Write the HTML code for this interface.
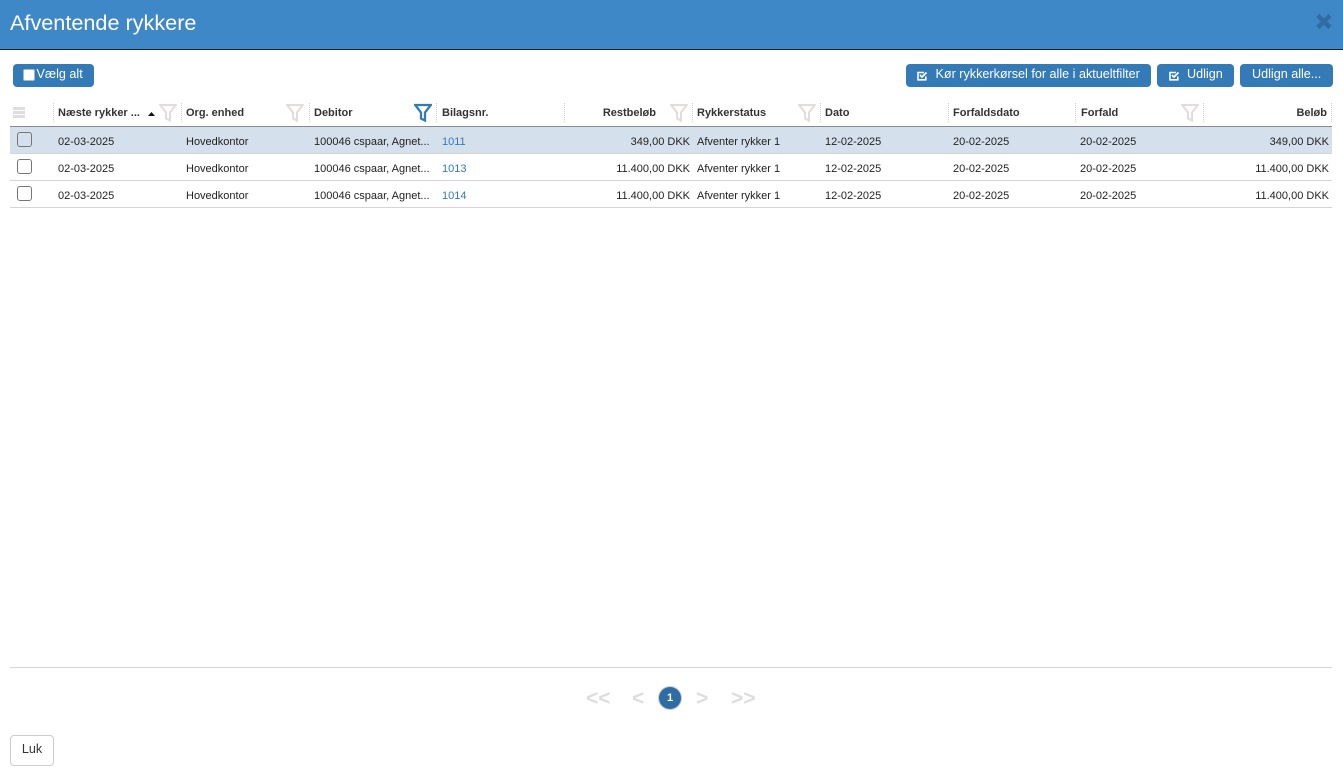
<!DOCTYPE html>
<html lang="da"><head><meta charset="utf-8"><title>Afventende rykkere</title>
<style>
html,body{margin:0;padding:0;width:1343px;height:772px;overflow:hidden;background:#fff;font-family:"Liberation Sans",Arial,sans-serif;color:#222}
.a{position:absolute;white-space:nowrap}
.hd{position:absolute;left:0;top:0;width:1343px;height:49px;background:#3f88c8;border-bottom:1px solid #1a2530}
.title{left:10px;top:10px;font-size:21.65px;line-height:26px;color:#fff}
.btn{position:absolute;top:64px;height:23px;background:#337ab7;border-radius:4px;color:#fff;font-size:12.6px;line-height:21px;white-space:nowrap}
.btn span{position:absolute;top:0}
.th{position:absolute;top:107px;font-size:11px;line-height:13px;font-weight:bold;color:#333;white-space:nowrap}
.td{position:absolute;font-size:11px;line-height:13px;color:#222;white-space:nowrap}
.r{text-align:right}
.sep{position:absolute;top:103px;height:19px;width:0;border-left:1px dotted #ccc}
.line{position:absolute;left:10px;width:1322px;height:1px}
.cb{position:absolute;left:17px;width:13px;height:13px;border:1px solid #767676;border-radius:3px;background:#fff}
.lnk{color:#337ab7}
.pg{position:absolute;top:688px;font-size:21px;line-height:22px;color:#ddd;font-weight:bold;white-space:nowrap}
</style></head><body>
<div class="hd"></div>
<div class="a title">Afventende rykkere</div>
<svg class="a" style="left:1315px;top:13px" width="18" height="17" viewBox="0 0 18 17"><path d="M2.8 2.5L15 14.5M15 2.5L2.8 14.5" stroke="#2f6ca3" stroke-width="4.6" fill="none"/></svg>

<div class="btn" style="left:13px;width:81px"><i class="a" style="left:10px;top:5px;width:10px;height:10px;background:#fff;border-radius:2px;border:1px solid #a8b8c8"></i><span style="left:23.5px">Vælg alt</span></div>
<div class="btn" style="left:906px;width:245px"><svg class="a" style="left:11px;top:7px" width="11" height="10" viewBox="0 0 11 10"><path d="M8.8 5.5V8.8H1V1.5H7" fill="none" stroke="#fff" stroke-width="1.6"/><path d="M3 4L5 6L9.5 1.5" fill="none" stroke="#fff" stroke-width="1.8"/></svg><span style="left:29.5px">Kør rykkerkørsel for alle i aktueltfilter</span></div>
<div class="btn" style="left:1157px;width:77px"><svg class="a" style="left:12px;top:7px" width="11" height="10" viewBox="0 0 11 10"><path d="M8.8 5.5V8.8H1V1.5H7" fill="none" stroke="#fff" stroke-width="1.6"/><path d="M3 4L5 6L9.5 1.5" fill="none" stroke="#fff" stroke-width="1.8"/></svg><span style="left:30px">Udlign</span></div>
<div class="btn" style="left:1240px;width:93px"><span style="left:12px">Udlign alle...</span></div>

<svg class="a" style="left:13px;top:107px" width="13" height="11" viewBox="0 0 13 11"><path d="M0 0h12v3H0zM0 4h12v3H0zM0 8h12v3H0z" fill="#e2dddd"/><path d="M0 3.5h12M0 7.5h12" stroke="#fff"/></svg>

<div class="sep" style="left:53px"></div><div class="sep" style="left:181px"></div><div class="sep" style="left:309px"></div><div class="sep" style="left:436px"></div><div class="sep" style="left:564px"></div><div class="sep" style="left:692px"></div><div class="sep" style="left:820px"></div><div class="sep" style="left:948px"></div><div class="sep" style="left:1075px"></div><div class="sep" style="left:1203px"></div><div class="sep" style="left:1331px"></div>

<div class="th" style="left:58px">Næste rykker ...</div>
<svg class="a" style="left:148px;top:112px" width="7" height="4"><path d="M0 4L3.5 0L7 4z" fill="#111"/></svg>
<div class="th" style="left:186px">Org. enhed</div>
<div class="th" style="left:314px">Debitor</div>
<div class="th" style="left:442px">Bilagsnr.</div>
<div class="th r" style="left:556px;width:100px">Restbeløb</div>
<div class="th" style="left:697px">Rykkerstatus</div>
<div class="th" style="left:825px">Dato</div>
<div class="th" style="left:953px">Forfaldsdato</div>
<div class="th" style="left:1081px">Forfald</div>
<div class="th r" style="left:1227px;width:100px">Beløb</div>

<svg class="a" style="left:159px;top:103px" width="18" height="19" viewBox="0 0 18 19"><path d="M1.2 2H16.8L11 9.5V17.5L7 15.5V9.5z" fill="none" stroke="#e2dddd" stroke-width="2.1"/></svg>
<svg class="a" style="left:286px;top:103px" width="18" height="19" viewBox="0 0 18 19"><path d="M1.2 2H16.8L11 9.5V17.5L7 15.5V9.5z" fill="none" stroke="#e2dddd" stroke-width="2.1"/></svg>
<svg class="a" style="left:414px;top:103px" width="18" height="19" viewBox="0 0 18 19"><path d="M1.2 2H16.8L11 9.5V17.5L7 15.5V9.5z" fill="none" stroke="#337ab7" stroke-width="2.3"/></svg>
<svg class="a" style="left:670px;top:103px" width="18" height="19" viewBox="0 0 18 19"><path d="M1.2 2H16.8L11 9.5V17.5L7 15.5V9.5z" fill="none" stroke="#e2dddd" stroke-width="2.1"/></svg>
<svg class="a" style="left:798px;top:103px" width="18" height="19" viewBox="0 0 18 19"><path d="M1.2 2H16.8L11 9.5V17.5L7 15.5V9.5z" fill="none" stroke="#e2dddd" stroke-width="2.1"/></svg>
<svg class="a" style="left:1181px;top:103px" width="18" height="19" viewBox="0 0 18 19"><path d="M1.2 2H16.8L11 9.5V17.5L7 15.5V9.5z" fill="none" stroke="#e2dddd" stroke-width="2.1"/></svg>

<div class="line" style="top:126px;background:#8a8a8a"></div>
<div class="a" style="left:10px;top:127px;width:1322px;height:26px;background:#d4e0ec"></div>
<div class="line" style="top:153px;background:#d8d3d3"></div>
<div class="line" style="top:180px;background:#d8d3d3"></div>
<div class="line" style="top:207px;background:#d8d3d3"></div>

<div class="cb" style="top:132px;background:#d4e0ec"></div><div class="cb" style="top:159px"></div><div class="cb" style="top:186px"></div>

<div class="td" style="left:58px;top:136px">02-03-2025</div><div class="td" style="left:186px;top:136px">Hovedkontor</div><div class="td" style="left:314px;top:136px">100046 cspaar, Agnet...</div><div class="td lnk" style="left:442px;top:136px">1011</div><div class="td r" style="left:590px;width:100px;top:136px">349,00 DKK</div><div class="td" style="left:697px;top:136px">Afventer rykker 1</div><div class="td" style="left:825px;top:136px">12-02-2025</div><div class="td" style="left:953px;top:136px">20-02-2025</div><div class="td" style="left:1080px;top:136px">20-02-2025</div><div class="td r" style="left:1229px;width:100px;top:136px">349,00 DKK</div>

<div class="td" style="left:58px;top:163px">02-03-2025</div><div class="td" style="left:186px;top:163px">Hovedkontor</div><div class="td" style="left:314px;top:163px">100046 cspaar, Agnet...</div><div class="td lnk" style="left:442px;top:163px">1013</div><div class="td r" style="left:590px;width:100px;top:163px">11.400,00 DKK</div><div class="td" style="left:697px;top:163px">Afventer rykker 1</div><div class="td" style="left:825px;top:163px">12-02-2025</div><div class="td" style="left:953px;top:163px">20-02-2025</div><div class="td" style="left:1080px;top:163px">20-02-2025</div><div class="td r" style="left:1229px;width:100px;top:163px">11.400,00 DKK</div>

<div class="td" style="left:58px;top:190px">02-03-2025</div><div class="td" style="left:186px;top:190px">Hovedkontor</div><div class="td" style="left:314px;top:190px">100046 cspaar, Agnet...</div><div class="td lnk" style="left:442px;top:190px">1014</div><div class="td r" style="left:590px;width:100px;top:190px">11.400,00 DKK</div><div class="td" style="left:697px;top:190px">Afventer rykker 1</div><div class="td" style="left:825px;top:190px">12-02-2025</div><div class="td" style="left:953px;top:190px">20-02-2025</div><div class="td" style="left:1080px;top:190px">20-02-2025</div><div class="td r" style="left:1229px;width:100px;top:190px">11.400,00 DKK</div>

<div class="line" style="top:667px;background:#d5d5d5"></div>

<div class="pg" style="left:586px">&lt;&lt;</div>
<div class="pg" style="left:632px">&lt;</div>
<div class="a" style="left:659px;top:687px;width:22px;height:22px;border-radius:50%;background:#2e6da4;box-shadow:0 0 0 1px #ccc;color:#fff;font-size:11px;font-weight:bold;line-height:22px;text-align:center">1</div>
<div class="pg" style="left:696px">&gt;</div>
<div class="pg" style="left:731px">&gt;&gt;</div>

<div class="a" style="left:10px;top:735px;width:42px;height:29px;border:1px solid #ccc;border-radius:4px;background:#fff;color:#333;font-size:12.6px;line-height:27px;text-align:center">Luk</div>
</body></html>
